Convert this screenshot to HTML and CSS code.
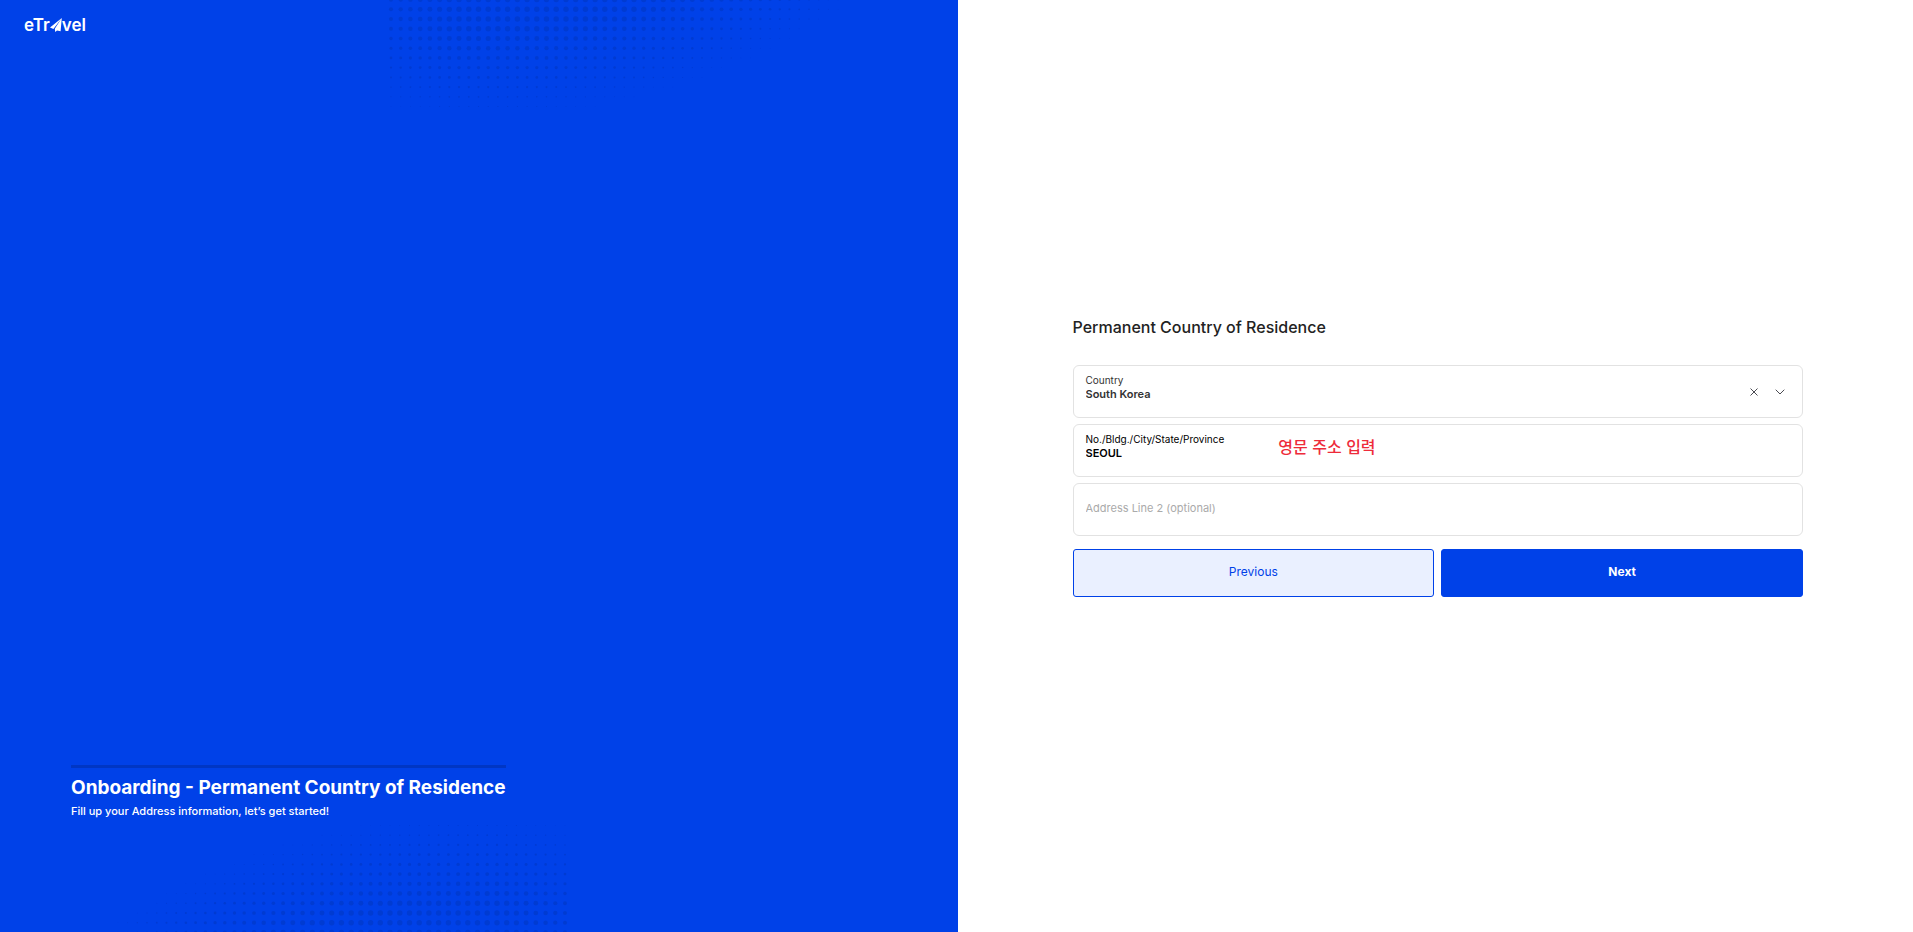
FILE: index.html
```html
<!DOCTYPE html>
<html lang="en">

<head>
  <meta charset="UTF-8">
  <meta name="viewport" content="width=device-width, initial-scale=1">
  <title>eTravel - Onboarding</title>
  <link rel="stylesheet" href="styles.css">
</head>

<body>
  <div class="container">
    <section class="sidePanel">
      <svg class="dots dotsTop" width="480" height="120" aria-hidden="true"></svg>
      <svg class="dots dotsBottom" width="480" height="120" aria-hidden="true"></svg>
      <a class="logo" href="#" aria-label="eTravel">
        <span>eTr</span>
        <svg class="logoPlane" viewBox="0 0 12 14" width="12" height="14" aria-hidden="true">
          <path d="M11.8 0 L0 9.6 L3.4 11 Z M11.8 0 L4.8 10.8 L5.2 14 L7 12.4 L10.6 13.2 Z" fill="#fff" />
        </svg>
        <span>vel</span>
      </a>
      <div class="intro">
        <h1>Onboarding - Permanent Country of Residence</h1>
        <p>Fill up your Address information, let’s get started!</p>
      </div>
    </section>

    <main class="formPanel">
      <form class="addressForm">
        <h2>Permanent Country of Residence</h2>

        <div class="field fieldCountry">
          <div class="fieldText">
            <label for="country">Country</label>
            <select id="country">
              <option>South Korea</option>
            </select>
          </div>
          <button class="clear" type="button" aria-label="Clear">
            <svg viewBox="0 0 8 8" width="8" height="8"><path d="M.5 .5 L7.5 7.5 M7.5 .5 L.5 7.5" /></svg>
          </button>
          <svg class="chevron" viewBox="0 0 10 6" width="10" height="6" aria-hidden="true"><path d="M.7 .7 L5 5 L9.3 .7" /></svg>
        </div>

        <div class="field fieldAddress">
          <div class="fieldText">
            <label for="address1">No./Bldg./City/State/Province</label>
            <input id="address1" type="text" value="SEOUL">
          </div>
          <span class="note" lang="ko">영문 주소 입력</span>
        </div>

        <div class="field fieldEmpty">
          <input id="address2" type="text" placeholder="Address Line 2 (optional)" aria-label="Address Line 2 (optional)">
        </div>

        <div class="buttons">
          <button class="previous" type="button">Previous</button>
          <button class="next" type="submit">Next</button>
        </div>
      </form>
    </main>
  </div>
  <script src="dots.js"></script>
</body>

</html>
```
FILE: styles.css
```css
* {
  box-sizing: border-box;
}
body {
  margin: 0;
  font-family: Inter, "Liberation Sans", sans-serif;
  font-size: 11px;
  color: #000;
  background-color: #fff;
}
h1, h2, p {
  margin: 0;
}
.container {
  display: grid;
  grid-template-columns: calc(50% + 1px) 1fr;
  min-height: 100vh;
}

/* left side */
.sidePanel {
  position: relative;
  display: flex;
  flex-direction: column;
  justify-content: space-between;
  align-items: flex-start;
  padding: 16px 24px 112px;
  color: #fff;
  background-color: #0041e8;
}
.dots {
  position: absolute;
  fill: #003bd2;
}
.dotsTop {
  top: 0;
  left: 386px;
}
.dotsBottom {
  bottom: 0;
  right: 388px;
  transform: rotate(180deg);
}
.logo {
  display: flex;
  align-items: center;
  color: #fff;
  font-size: 17px;
  line-height: 18px;
  font-weight: 600;
  text-decoration: none;
}
.intro {
  position: relative;
  margin-left: 47px;
  border-top: 3px solid #0036c4;
  padding-top: 6px;
}
.intro h1 {
  font-size: 19px;
  line-height: 28px;
  font-weight: 700;
}
.intro p {
  line-height: 18px;
  font-weight: 500;
}

/* right side */
.formPanel {
  display: flex;
  align-items: center;
  justify-content: center;
  padding: 0 110px 20px 115px;
}
.addressForm {
  width: 100%;
}
.addressForm h2 {
  margin-bottom: 26px;
  font-size: 16px;
  line-height: 24px;
  font-weight: 500;
  color: #222;
}
.field {
  display: flex;
  align-items: center;
  height: 53px;
  margin-bottom: 6px;
  padding: 0 12px;
  border: 1px solid #e2e2e2;
  border-radius: 6px;
}
.fieldText {
  display: flex;
  flex-direction: column;
  align-self: flex-start;
  padding-top: 8px;
}
.fieldCountry .fieldText {
  flex: 1;
}
.fieldEmpty {
  padding-bottom: 4px;
}
label {
  font-size: 10px;
  line-height: 12px;
}
select, input {
  width: 0;
  min-width: 100%;
  height: 16px;
  padding: 0;
  border: none;
  outline: none;
  appearance: none;
  background: none;
  font: 600 11px/16px Inter, "Liberation Sans", sans-serif;
  color: inherit;
}
input::placeholder {
  color: #aaa;
  opacity: 1;
  font-weight: 400;
}
.fieldCountry {
  color: #333;
}
.clear {
  display: flex;
  margin: 0 17px;
  padding: 0;
  border: none;
  background: none;
  cursor: pointer;
}
.clear svg, .chevron {
  fill: none;
  stroke: #4b4b52;
}
.chevron {
  margin-right: 5px;
}
.note {
  margin: 0 0 10px 54px;
  font: 500 16px/20px "Noto Sans CJK KR", sans-serif;
  color: #ee2b3a;
}
.buttons {
  display: grid;
  grid-template-columns: 1fr 1fr;
  gap: 7px;
  margin-top: 13px;
}
.buttons button {
  height: 48px;
  padding-bottom: 4px;
  border: 1px solid #0041e8;
  border-radius: 3px;
  font-family: inherit;
  font-size: 12px;
  cursor: pointer;
}
.previous {
  color: #0041e8;
  background-color: #eaf0ff;
}
.next {
  color: #fff;
  background-color: #0041e8;
  font-weight: 700;
}
```
FILE: dots.js
```js
const step = 9.72;

// halftone dots get smaller towards the rim of one big circle
function drawDots(svg) {
  for (let row = 0; row < 12; row++) {
    for (let col = 0; col < 48; col++) {
      const x = 5 + col * step;
      const y = -0.4 + row * step;
      const depth = 652 - Math.hypot(x - 94, y + 535);
      if (depth < 0) {
        continue;
      }
      const edge = Math.min(1, 0.75 + col * 0.04);
      const dot = document.createElementNS("http://www.w3.org/2000/svg", "circle");
      dot.setAttribute("cx", x.toFixed(1));
      dot.setAttribute("cy", y.toFixed(1));
      dot.setAttribute("r", (Math.min(2.7, 0.3 + depth * 0.028) * edge).toFixed(2));
      svg.appendChild(dot);
    }
  }
}

document.querySelectorAll(".dots").forEach(drawDots);
```
